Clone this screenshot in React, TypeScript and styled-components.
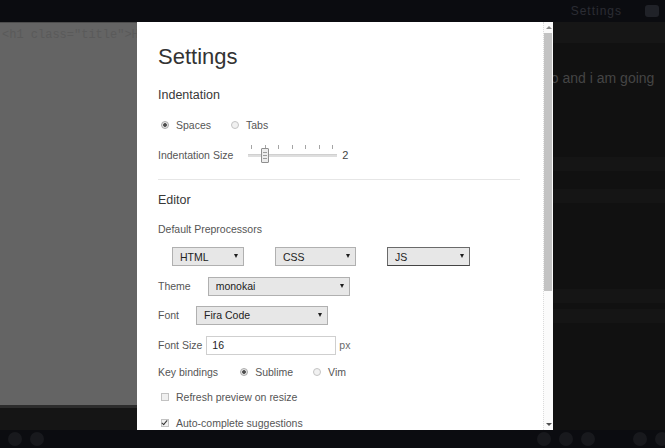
import styled, { createGlobalStyle } from 'styled-components';

const GlobalStyle = createGlobalStyle`
  html, body {
    margin: 0;
    padding: 0;
    background: #0b0c10;
  }
  body {
    font-family: 'Liberation Sans', Arial, sans-serif;
    overflow: hidden;
  }
  * {
    box-sizing: border-box;
  }
`;

const INDENT_MIN = 1;
const INDENT_MAX = 7;
const indentSize = 2;

// modal scroll geometry (visible part vs full settings list)
const MODAL_HEIGHT = 408;
const CONTENT_HEIGHT = 610;
const TRACK_HEIGHT = MODAL_HEIGHT - 22;

export default function App() {
  const ticks = Array.from({ length: INDENT_MAX - INDENT_MIN + 1 });
  const thumbLeft = ((indentSize - INDENT_MIN) / (INDENT_MAX - INDENT_MIN)) * 82;
  const thumbHeight = Math.round((TRACK_HEIGHT * MODAL_HEIGHT) / CONTENT_HEIGHT);

  return (
    <Page>
      <GlobalStyle />
      <TopBar>
        <TopMenu>
          <TopMenuItem>Settings</TopMenuItem>
          <TopIcon />
        </TopMenu>
      </TopBar>

      <Workspace>
        <EditorPane>
          <EditorBody>
            <CodeLine>&lt;h1 class="title"&gt;Hello world&lt;/h1&gt;</CodeLine>
          </EditorBody>
          <ConsoleStrip />
        </EditorPane>

        <PreviewPane>
          <PreviewHeader />
          <PreviewLine>Hi there, my name is Pedro and i am going</PreviewLine>
          <PreviewBlock $mt={70} />
          <PreviewBlock $mt={18} />
          <PreviewBlock $mt={86} />
          <PreviewBlock $mt={6} />
        </PreviewPane>

        <Modal>
          <ModalBody>
            <ModalTitle>Settings</ModalTitle>

            <SectionTitle $mt={16}>Indentation</SectionTitle>
            <Row $mt={11}>
              <RadioGroup>
                <RadioOption>
                  <Radio name="indent" defaultChecked />
                  Spaces
                </RadioOption>
                <RadioOption>
                  <Radio name="indent" />
                  Tabs
                </RadioOption>
              </RadioGroup>
            </Row>
            <Row $mt={10}>
              <Label $gap={15}>Indentation Size</Label>
              <SliderBox>
                <Ticks>
                  {ticks.map((_, i) => (
                    <Tick key={i} />
                  ))}
                </Ticks>
                <Track />
                <Thumb style={{ left: `${3 + thumbLeft}px` }} />
              </SliderBox>
              <SliderValue>{indentSize}</SliderValue>
            </Row>

            <Divider />

            <SectionTitle $mt={11}>Editor</SectionTitle>
            <Row $mt={10}>Default Preprocessors</Row>
            <PreprocRow>
              <SelectWrap $w={72}>
                <Select defaultValue="html">
                  <option value="html">HTML</option>
                  <option value="pug">Pug</option>
                </Select>
              </SelectWrap>
              <SelectWrap $w={81}>
                <Select defaultValue="css">
                  <option value="css">CSS</option>
                  <option value="scss">SCSS</option>
                </Select>
              </SelectWrap>
              <SelectWrap $w={83}>
                <Select defaultValue="js" $focused>
                  <option value="js">JS</option>
                  <option value="ts">TypeScript</option>
                </Select>
              </SelectWrap>
            </PreprocRow>

            <Row $mt={10}>
              <Label $gap={17}>Theme</Label>
              <SelectWrap $w={142}>
                <Select defaultValue="monokai">
                  <option value="monokai">monokai</option>
                  <option value="dracula">dracula</option>
                </Select>
              </SelectWrap>
            </Row>
            <Row $mt={9}>
              <Label $gap={17}>Font</Label>
              <SelectWrap $w={132}>
                <Select defaultValue="fira">
                  <option value="fira">Fira Code</option>
                  <option value="mono">Monaco</option>
                </Select>
              </SelectWrap>
            </Row>
            <Row $mt={10}>
              <Label $gap={4}>Font Size</Label>
              <NumberInput type="text" defaultValue="16" />
              <Unit>px</Unit>
            </Row>
            <Row $mt={7}>
              <Label $gap={19}>Key bindings</Label>
              <RadioGroup>
                <RadioOption>
                  <Radio name="keys" defaultChecked />
                  Sublime
                </RadioOption>
                <RadioOption>
                  <Radio name="keys" />
                  Vim
                </RadioOption>
              </RadioGroup>
            </Row>
            <Row $mt={5}>
              <CheckOption>
                <Checkbox />
                Refresh preview on resize
              </CheckOption>
            </Row>
            <Row $mt={6}>
              <CheckOption>
                <Checkbox defaultChecked />
                Auto-complete suggestions
              </CheckOption>
            </Row>
          </ModalBody>

          <ScrollBar>
            <ScrollArrow $dir="up" />
            <ScrollTrack>
              <ScrollThumb style={{ height: `${thumbHeight}px` }} />
            </ScrollTrack>
            <ScrollArrow $dir="down" />
          </ScrollBar>
        </Modal>
      </Workspace>

      <BottomBar>
        <BarGroup>
          <RoundButton />
          <RoundButton />
        </BarGroup>
        <BarGroup $right>
          <RoundButton />
          <RoundButton />
          <RoundButton />
          <Spacer />
          <RoundButton />
          <RoundButton />
        </BarGroup>
      </BottomBar>
    </Page>
  );
}

const Page = styled.div`
  width: 665px;
  height: 448px;
  display: flex;
  flex-direction: column;
  overflow: hidden;
  background: #0b0c10;
`;

const TopBar = styled.header`
  height: 22px;
  display: flex;
  align-items: center;
  background: #0b0c10;
`;

const TopMenu = styled.nav`
  margin-left: auto;
  margin-right: 6px;
  display: flex;
  align-items: center;
  gap: 23px;
`;

const TopMenuItem = styled.span`
  font-size: 12px;
  letter-spacing: 1px;
  color: #2b2d34;
  white-space: nowrap;
`;

const TopIcon = styled.span`
  width: 14px;
  height: 12px;
  border-radius: 3px;
  background: #202228;
`;

const Workspace = styled.main`
  position: relative;
  height: 408px;
  display: flex;
`;

const EditorPane = styled.section`
  width: 270px;
  display: flex;
  flex-direction: column;
`;

const EditorBody = styled.div`
  flex: 1;
  background: #646464;
  padding: 5px 0 0 2px;
  border-top: 1px solid #4c4c4c;
  overflow: hidden;
`;

const CodeLine = styled.div`
  font-family: 'Liberation Mono', monospace;
  font-size: 12px;
  line-height: 14px;
  color: #5a5a5a;
  white-space: nowrap;
`;

const ConsoleStrip = styled.div`
  height: 25px;
  background: #151515;
  border-top: 3px solid #2c2c2c;
`;

const PreviewPane = styled.section`
  flex: 1;
  background: #111111;
  display: flex;
  flex-direction: column;
  overflow: hidden;
`;

const PreviewHeader = styled.div`
  height: 21px;
  background: #161616;
`;

const PreviewLine = styled.p`
  margin: 27px 0 0 119px;
  font-size: 14px;
  line-height: 17px;
  color: #454545;
  white-space: nowrap;
`;

const PreviewBlock = styled.div<{ $mt: number }>`
  margin-top: ${(p) => p.$mt}px;
  height: 14px;
  background: #151515;
`;

const Modal = styled.div`
  position: absolute;
  left: 137px;
  top: 0;
  bottom: 0;
  width: 416px;
  display: flex;
  background: #ffffff;
`;

const ModalBody = styled.div`
  flex: 1;
  overflow: hidden;
  padding: 22px 23px 0 21px;
  color: #555555;
`;

const ScrollBar = styled.div`
  width: 10px;
  display: flex;
  flex-direction: column;
  background: #fbfbfb;
  border-left: 1px dotted #dcdcdc;
`;

const ScrollArrow = styled.div<{ $dir: 'up' | 'down' }>`
  height: 11px;
  display: flex;
  align-items: center;
  justify-content: center;

  &::before {
    content: '';
    border-left: 3px solid transparent;
    border-right: 3px solid transparent;
    ${(p) => (p.$dir === 'up' ? 'border-bottom: 3px solid #8a8a8a;' : 'border-top: 3px solid #505050;')}
  }
`;

const ScrollTrack = styled.div`
  flex: 1;
  padding: 0 1px 0 0;
`;

const ScrollThumb = styled.div`
  background: #c3c3c3;
`;

const ModalTitle = styled.h1`
  margin: 0;
  font-size: 22px;
  line-height: 26px;
  font-weight: normal;
  color: #333333;
`;

const SectionTitle = styled.h2<{ $mt: number }>`
  margin: ${(p) => p.$mt}px 0 0;
  font-size: 12.5px;
  line-height: 18px;
  font-weight: normal;
  color: #383838;
`;

const Row = styled.div<{ $mt: number }>`
  margin-top: ${(p) => p.$mt}px;
  height: 20px;
  display: flex;
  align-items: center;
  font-size: 10.5px;
  color: #555555;
  white-space: nowrap;
`;

const PreprocRow = styled.div`
  margin-top: 7px;
  height: 20px;
  display: flex;
  align-items: center;
  gap: 31px;
  padding-left: 14px;
`;

const Label = styled.span<{ $gap: number }>`
  margin-right: ${(p) => p.$gap}px;
`;

const Divider = styled.hr`
  margin: 14px 0 0;
  border: 0;
  border-top: 1px solid #e6e6e6;
`;

const RadioGroup = styled.div`
  display: flex;
  align-items: center;
  gap: 17px;
`;

const RadioOption = styled.label`
  display: flex;
  align-items: center;
`;

const Radio = styled.input.attrs({ type: 'radio' })`
  appearance: none;
  width: 8px;
  height: 8px;
  margin: 0 7px 0 3px;
  border-radius: 50%;
  border: 1px solid #c4c4c4;
  background: #f1f1f1;

  &:checked {
    border-color: #a9a9a9;
    background: radial-gradient(circle, #4d4d4d 0 1.5px, #e4e4e4 2.2px);
  }
`;

const CheckOption = styled.label`
  display: flex;
  align-items: center;
`;

const Checkbox = styled.input.attrs({ type: 'checkbox' })`
  appearance: none;
  position: relative;
  width: 8px;
  height: 8px;
  margin: 0 7px 0 3px;
  border: 1px solid #c2c2c2;
  background: #f0f0f0;

  &:checked::after {
    content: '';
    position: absolute;
    left: 1px;
    top: -1px;
    width: 2px;
    height: 5px;
    border-right: 1.5px solid #333;
    border-bottom: 1.5px solid #333;
    transform: rotate(40deg);
  }
`;

const SelectWrap = styled.span<{ $w: number }>`
  position: relative;
  display: inline-block;
  width: ${(p) => p.$w}px;
  height: 19px;

  &::after {
    content: '';
    position: absolute;
    right: 6px;
    top: 7px;
    border-left: 2.5px solid transparent;
    border-right: 2.5px solid transparent;
    border-top: 4px solid #1e1e1e;
    pointer-events: none;
  }
`;

const Select = styled.select<{ $focused?: boolean }>`
  appearance: none;
  width: 100%;
  height: 100%;
  margin: 0;
  padding: 0 0 0 7px;
  font-family: 'Liberation Sans', Arial, sans-serif;
  font-size: 10.5px;
  color: #222222;
  background: #e7e7e7;
  border: 1px solid ${(p) => (p.$focused ? '#6a6a6a' : '#b0b0b0')};
  border-bottom-color: ${(p) => (p.$focused ? '#444444' : '#b0b0b0')};
  border-radius: 0;
  outline: none;
`;

const NumberInput = styled.input`
  width: 130px;
  height: 19px;
  margin: 0;
  padding: 0 5px;
  font-family: 'Liberation Sans', Arial, sans-serif;
  font-size: 10.5px;
  color: #222222;
  background: #ffffff;
  border: 1px solid #cfcfcf;
  border-radius: 0;
  outline: none;
`;

const Unit = styled.span`
  margin-left: 3px;
  color: #6a6a6a;
`;

const SliderBox = styled.div`
  position: relative;
  width: 89px;
  height: 20px;
`;

const Ticks = styled.div`
  position: absolute;
  top: 0;
  left: 3px;
  right: 4px;
  height: 4px;
  display: flex;
  justify-content: space-between;
`;

const Tick = styled.span`
  width: 1px;
  height: 4px;
  background: #a5a5a5;
`;

const Track = styled.div`
  position: absolute;
  left: 0;
  right: 0;
  top: 9px;
  height: 3px;
  background: #dedede;
  border-top: 1px solid #d0d0d0;
`;

const Thumb = styled.div`
  position: absolute;
  top: 3px;
  width: 8px;
  height: 15px;
  transform: translateX(-50%);
  background:
    repeating-linear-gradient(to bottom, #9c9c9c 0 1px, transparent 1px 3px) center / 4px 7px no-repeat,
    #ececec;
  border: 1px solid #8f8f8f;
  border-radius: 1px;
`;

const SliderValue = styled.span`
  margin-left: 5px;
  font-size: 11px;
  color: #444444;
`;

const BottomBar = styled.footer`
  height: 18px;
  display: flex;
  align-items: center;
  padding: 0 0 0 8px;
  background: #0b0c10;
`;

const BarGroup = styled.div<{ $right?: boolean }>`
  display: flex;
  align-items: center;
  gap: 8px;
  margin-left: ${(p) => (p.$right ? 'auto' : '0')};
  margin-right: ${(p) => (p.$right ? '-4px' : '0')};
`;

const Spacer = styled.span`
  width: 22px;
`;

const RoundButton = styled.span`
  width: 14px;
  height: 14px;
  border-radius: 50%;
  background: #18191d;
`;
